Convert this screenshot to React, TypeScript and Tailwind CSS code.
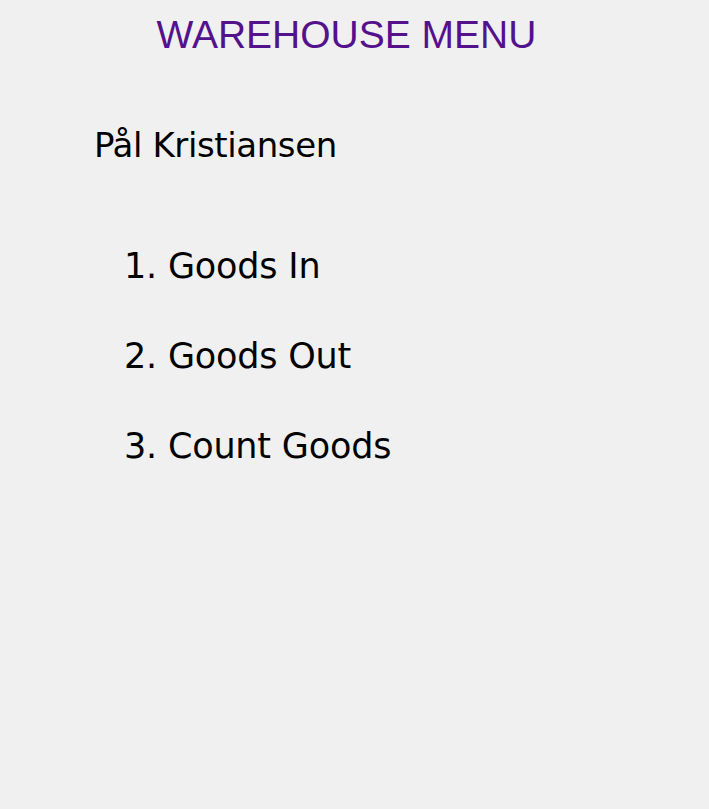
export default function App() {
  const items = ['Goods In', 'Goods Out', 'Count Goods']
  return (
    <div className="min-h-[809px] w-full bg-[#f0f0f0] pt-[12px] text-black">
      <h1 className="pr-[16px] text-center text-[39px] leading-[45px] text-[#53128c] font-['Liberation_Sans',Arial,sans-serif] font-normal">
        WAREHOUSE MENU
      </h1>
      <p className="mt-[68px] ml-[94px] text-[34px] leading-[40px] tracking-[-0.4px] font-['DejaVu_Sans',Tahoma,sans-serif]">
        Pål Kristiansen
      </p>
      <ol className="mt-[81px] ml-[124px] flex flex-col gap-[50px] text-[35px] leading-[40px] tracking-[-0.2px] font-['DejaVu_Sans',Tahoma,sans-serif]">
        {items.map((item, i) => (
          <li key={item}>{i + 1}. {item}</li>
        ))}
      </ol>
    </div>
  )
}
